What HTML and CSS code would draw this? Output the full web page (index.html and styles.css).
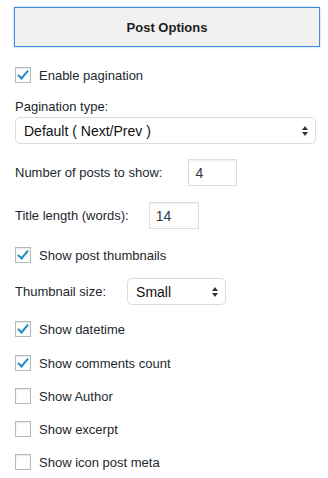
FILE: index.html
```html
<!DOCTYPE html>
<html>
<head>
<meta charset="utf-8">
<link rel="stylesheet" href="styles.css">
</head>
<body>
<div class="panel">
  <div class="header">Post Options</div>

  <label class="check m20"><span class="box on"></span>Enable pagination</label>

  <div class="label m16">Pagination type:</div>
  <div class="select full m2"><span>Default ( Next/Prev )</span><span class="arrows"></span></div>

  <div class="row m15"><span>Number of posts to show:</span><span class="input w-num">4</span></div>
  <div class="row m16"><span>Title length (words):</span><span class="input w-title">14</span></div>

  <label class="check m18"><span class="box on"></span>Show post thumbnails</label>

  <div class="row m15"><span>Thumbnail size:</span><div class="select small"><span>Small</span><span class="arrows"></span></div></div>

  <label class="check m16"><span class="box on"></span>Show datetime</label>
  <label class="check m18"><span class="box on"></span>Show comments count</label>
  <label class="check m17"><span class="box"></span>Show Author</label>
  <label class="check m17"><span class="box"></span>Show excerpt</label>
  <label class="check m17"><span class="box"></span>Show icon post meta</label>
</div>
</body>
</html>
```
FILE: styles.css
```css
html, body {
  margin: 0;
  padding: 0;
  background: #fff;
}
body {
  font-family: "Liberation Sans", Arial, sans-serif;
  font-size: 13px;
  color: #23282d;
}
.panel {
  display: flex;
  flex-direction: column;
  align-items: flex-start;
  padding: 7px 10px 0 15px;
}
.header {
  align-self: stretch;
  margin-left: -1px;
  margin-right: -2px;
  height: 38px;
  border: 1px solid #3d8fdd;
  box-shadow: 0 0 2px rgba(60, 140, 220, 0.5);
  background: #f1f1f1;
  font-weight: bold;
  display: flex;
  align-items: center;
  justify-content: center;
  color: #1e1e1e;
}
.m2 { margin-top: 2px; }
.m15 { margin-top: 15px; }
.m16 { margin-top: 16px; }
.m17 { margin-top: 17px; }
.m18 { margin-top: 18px; }
.m20 { margin-top: 20px; }
.check {
  display: flex;
  align-items: center;
  height: 16px;
  gap: 8px;
}
.box {
  box-sizing: border-box;
  width: 16px;
  height: 16px;
  border: 1px solid #b4b9be;
  background: #fff;
  box-shadow: inset 0 1px 2px rgba(0, 0, 0, 0.1);
  position: relative;
}
.box.on::after {
  content: "";
  position: absolute;
  left: 4px;
  top: 0px;
  width: 4px;
  height: 9px;
  border-right: 2.5px solid #1e8cbe;
  border-bottom: 2.5px solid #1e8cbe;
  transform: rotate(40deg);
}
.label {
  height: 16px;
  line-height: 16px;
}
.select {
  box-sizing: border-box;
  height: 27px;
  border: 1px solid #dcdcdc;
  border-radius: 5px;
  background: #fff;
  display: flex;
  align-items: center;
  justify-content: space-between;
  padding: 0 6px 0 8px;
  font-size: 14px;
  color: #111;
}
.select.full {
  align-self: stretch;
  margin-right: 2px;
}
.select.small {
  width: 99px;
  margin-left: 21px;
  padding-left: 8px;
}
.arrows {
  width: 0;
  height: 0;
  position: relative;
  margin-right: 3px;
}
.arrows::before, .arrows::after {
  content: "";
  position: absolute;
  left: -4px;
  border-left: 3.5px solid transparent;
  border-right: 3.5px solid transparent;
}
.arrows::before {
  top: -5px;
  border-bottom: 4px solid #333;
}
.arrows::after {
  top: 1px;
  border-top: 4px solid #333;
}
.row {
  display: flex;
  align-items: center;
  height: 27px;
}
.input {
  box-sizing: border-box;
  height: 27px;
  border: 1px solid #ddd;
  box-shadow: inset 0 1px 2px rgba(0, 0, 0, 0.07);
  display: flex;
  align-items: center;
  padding-left: 6px;
  font-size: 14px;
  color: #32373c;
}
.w-num {
  width: 49px;
  margin-left: 26px;
}
.w-title {
  width: 50px;
  margin-left: 20px;
}
```
